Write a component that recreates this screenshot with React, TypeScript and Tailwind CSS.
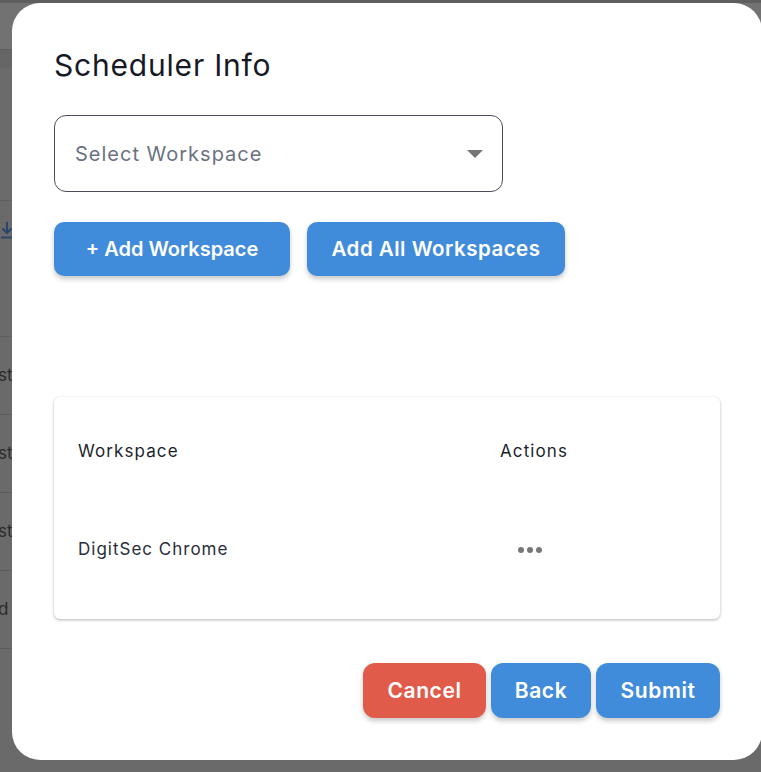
import React from "react";

const font = { fontFamily: "Inter, 'Noto Sans', sans-serif" };

function BgRow({ text }: { text: string }) {
  return (
    <div className="h-[78px] border-b border-[#5c5c5c] flex items-center">
      <span className="text-[17px] text-[#2a2a2a] -ml-[2px]">{text}</span>
    </div>
  );
}

export default function App() {
  return (
    <div className="relative w-[761px] h-[772px] overflow-hidden bg-[#6a6a6a]" style={font}>
      {/* Dimmed page behind */}
      <div className="flex flex-col">
        <div className="h-[3px] bg-[#5e5e5e]" />
        <div className="h-[46px] bg-[#727272]" />
        <div className="h-[1px] bg-[#5e5e5e]" />
        <div className="h-[18px] bg-[#666666]" />
        <div className="h-[133px] bg-[#6b6b6b] border-b border-[#5e5e5e]" />
        <div className="h-[135px] pt-[20px] pl-[1px]">
          <svg width="12" height="18" viewBox="0 0 12 18" fill="none" stroke="#29466a" strokeWidth="2">
            <path d="M6 1 V12 M1.5 7.5 L6 12 L10.5 7.5 M0 16.5 H12" />
          </svg>
        </div>
        <div className="border-t border-[#5e5e5e]">
          <BgRow text="st" />
          <BgRow text="st" />
          <BgRow text="st" />
          <BgRow text="d" />
        </div>
      </div>

      {/* Modal */}
      <div className="absolute left-[12px] top-[3px] w-[750px] h-[757px] rounded-[28px] bg-white px-[42px] pt-[44px] flex flex-col">
        <h2 className="text-[30px] leading-[36px] text-[#161a26] tracking-[0.8px]">Scheduler Info</h2>

        <div className="mt-[32px] w-[449px] h-[77px] rounded-[12px] border border-[#4b5058] flex items-center justify-between pl-[20px] pr-[19px]">
          <span className="text-[20px] text-[#6b7280] tracking-[1px]">Select Workspace</span>
          <svg width="16" height="8" viewBox="0 0 16 8">
            <path d="M0 0 H16 L8 8 Z" fill="#757575" />
          </svg>
        </div>

        <div className="mt-[30px] flex gap-[17px]">
          <button className="h-[54px] w-[236px] rounded-[10px] bg-[#418cda] text-white text-[20px] font-semibold shadow-[0_3px_5px_rgba(0,0,0,0.22)]">
            + Add Workspace
          </button>
          <button className="h-[54px] w-[258px] rounded-[10px] bg-[#418cda] text-white text-[20.5px] font-semibold shadow-[0_3px_5px_rgba(0,0,0,0.22)] tracking-[0.5px]">
            Add All Workspaces
          </button>
        </div>

        <div className="mt-[121px] h-[222px] w-[666px] rounded-[6px] bg-white shadow-[0_1px_3px_rgba(0,0,0,0.3)] flex flex-col pl-[24px]">
          <div className="h-[110px] flex items-center text-[17px] text-[#1c1f2a] tracking-[1.1px]">
            <div className="w-[422px]">Workspace</div>
            <div className="w-[66px] text-center">Actions</div>
          </div>
          <div className="h-[86px] flex items-center text-[17px] text-[#2a2d38] tracking-[1px]">
            <div className="w-[422px]">DigitSec Chrome</div>
            <div className="w-[60px] flex justify-center gap-[3px]">
              <span className="w-[6px] h-[6px] rounded-full bg-[#777]" />
              <span className="w-[6px] h-[6px] rounded-full bg-[#777]" />
              <span className="w-[6px] h-[6px] rounded-full bg-[#777]" />
            </div>
          </div>
        </div>

        <div className="mt-[44px] w-[666px] flex justify-end gap-[5px]">
          <button className="h-[55px] w-[123px] rounded-[12px] bg-[#e05b4a] text-white text-[21px] font-semibold shadow-[0_3px_5px_rgba(0,0,0,0.22)] tracking-[0.6px]">
            Cancel
          </button>
          <button className="h-[55px] w-[100px] rounded-[12px] bg-[#418cda] text-white text-[21px] font-semibold shadow-[0_3px_5px_rgba(0,0,0,0.22)] tracking-[0.6px]">
            Back
          </button>
          <button className="h-[55px] w-[124px] rounded-[12px] bg-[#418cda] text-white text-[21px] font-semibold shadow-[0_3px_5px_rgba(0,0,0,0.22)] tracking-[0.6px]">
            Submit
          </button>
        </div>
      </div>
    </div>
  );
}
